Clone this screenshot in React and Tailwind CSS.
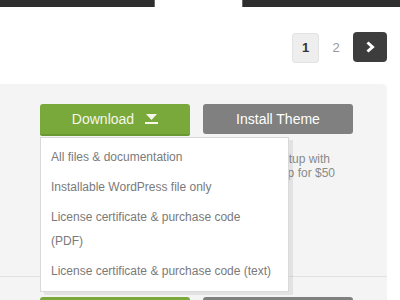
import React from 'react';

const menuItems = [
  ['All files & documentation'],
  ['Installable WordPress file only'],
  ['License certificate & purchase code', '(PDF)'],
  ['License certificate & purchase code (text)'],
];

function ArrowDown() {
  return (
    <svg width="13" height="10" viewBox="0 0 13 10" className="block">
      <polygon points="1,0 12,0 6.5,6" fill="#f6f6ea" />
      <rect x="0" y="8" width="13" height="2" fill="#f6f6ea" />
    </svg>
  );
}

function Chevron() {
  return (
    <svg width="12" height="12" viewBox="0 0 12 12" className="block">
      <path d="M3.5 1.5 L8.5 6 L3.5 10.5" fill="none" stroke="#fff" strokeWidth="3" />
    </svg>
  );
}

function Buttons({ labels = true }) {
  return (
    <div className="flex gap-[13px]">
      <button className="w-[150px] h-[32px] rounded-t-[3px] rounded-b-[2px] bg-[#7aa93b] border-b-2 border-[#6c9833] text-[14px] text-[#f4f6ea] flex items-center justify-center gap-[11px]">
        {labels && <span>Download</span>}
        {labels && <ArrowDown />}
      </button>
      <button className="w-[150px] h-[30px] rounded-[3px] bg-[#808080] text-[14px] text-white flex items-center justify-center">
        {labels && 'Install Theme'}
      </button>
    </div>
  );
}

export default function App() {
  return (
    <div className="w-[400px] h-[300px] overflow-hidden bg-white font-['Liberation_Sans',Arial,sans-serif]">
      <div className="flex justify-between h-[7px]">
        <div className="w-[155px] bg-[#2e2e2e] border-r border-[#6a6a6a]" />
        <div className="w-[158px] bg-[#2e2e2e] border-l border-[#6a6a6a]" />
      </div>

      <div className="flex justify-end items-start pr-[13px] mt-[25px] h-[31px]">
        <div className="mt-[1px] w-[27px] h-[30px] rounded-[3px] bg-[#eeeeee] border border-[#e3e3e3] flex items-center justify-center text-[13px] font-bold text-[#333]">
          1
        </div>
        <div className="w-[34px] h-[31px] flex items-center justify-center text-[13px] text-[#999]">2</div>
        <button className="w-[34px] h-[30px] rounded-[4px] bg-[#3d3d3d] flex items-center justify-center">
          <Chevron />
        </button>
      </div>

      <div className="mt-[21px] mr-[13px] bg-[#f4f4f4] rounded-tr-[5px]">
        <div className="relative h-[193px] border-b border-[#e1e1e1] pt-[20px] pl-[40px]">
          <Buttons />
          <div className="flex">
            <div className="w-[163px]" />
            <div className="w-[150px] mt-[16px] text-right text-[12px] leading-[14px] text-[#8a8a8a]">
              <div className="pr-[23px]">Quick theme setup with</div>
              <div className="pr-[18px]">our expert setup for $50</div>
            </div>
          </div>

          <div className="absolute left-[40px] top-[53px] w-[249px] bg-white border border-[#d9d9d9] shadow-[4px_3px_0_rgba(0,0,0,0.07)] pt-[4px] pb-[5px] z-10">
            {menuItems.map((lines, i) => (
              <div key={i} className="px-[10px] py-[3px] text-[12px] leading-[24px] text-[#7a7a7a]">
                {lines.map((l, j) => (
                  <div key={j}>{l}</div>
                ))}
              </div>
            ))}
          </div>
        </div>
        <div className="pt-[20px] pl-[40px] h-[40px]">
          <Buttons labels={false} />
        </div>
      </div>
    </div>
  );
}
